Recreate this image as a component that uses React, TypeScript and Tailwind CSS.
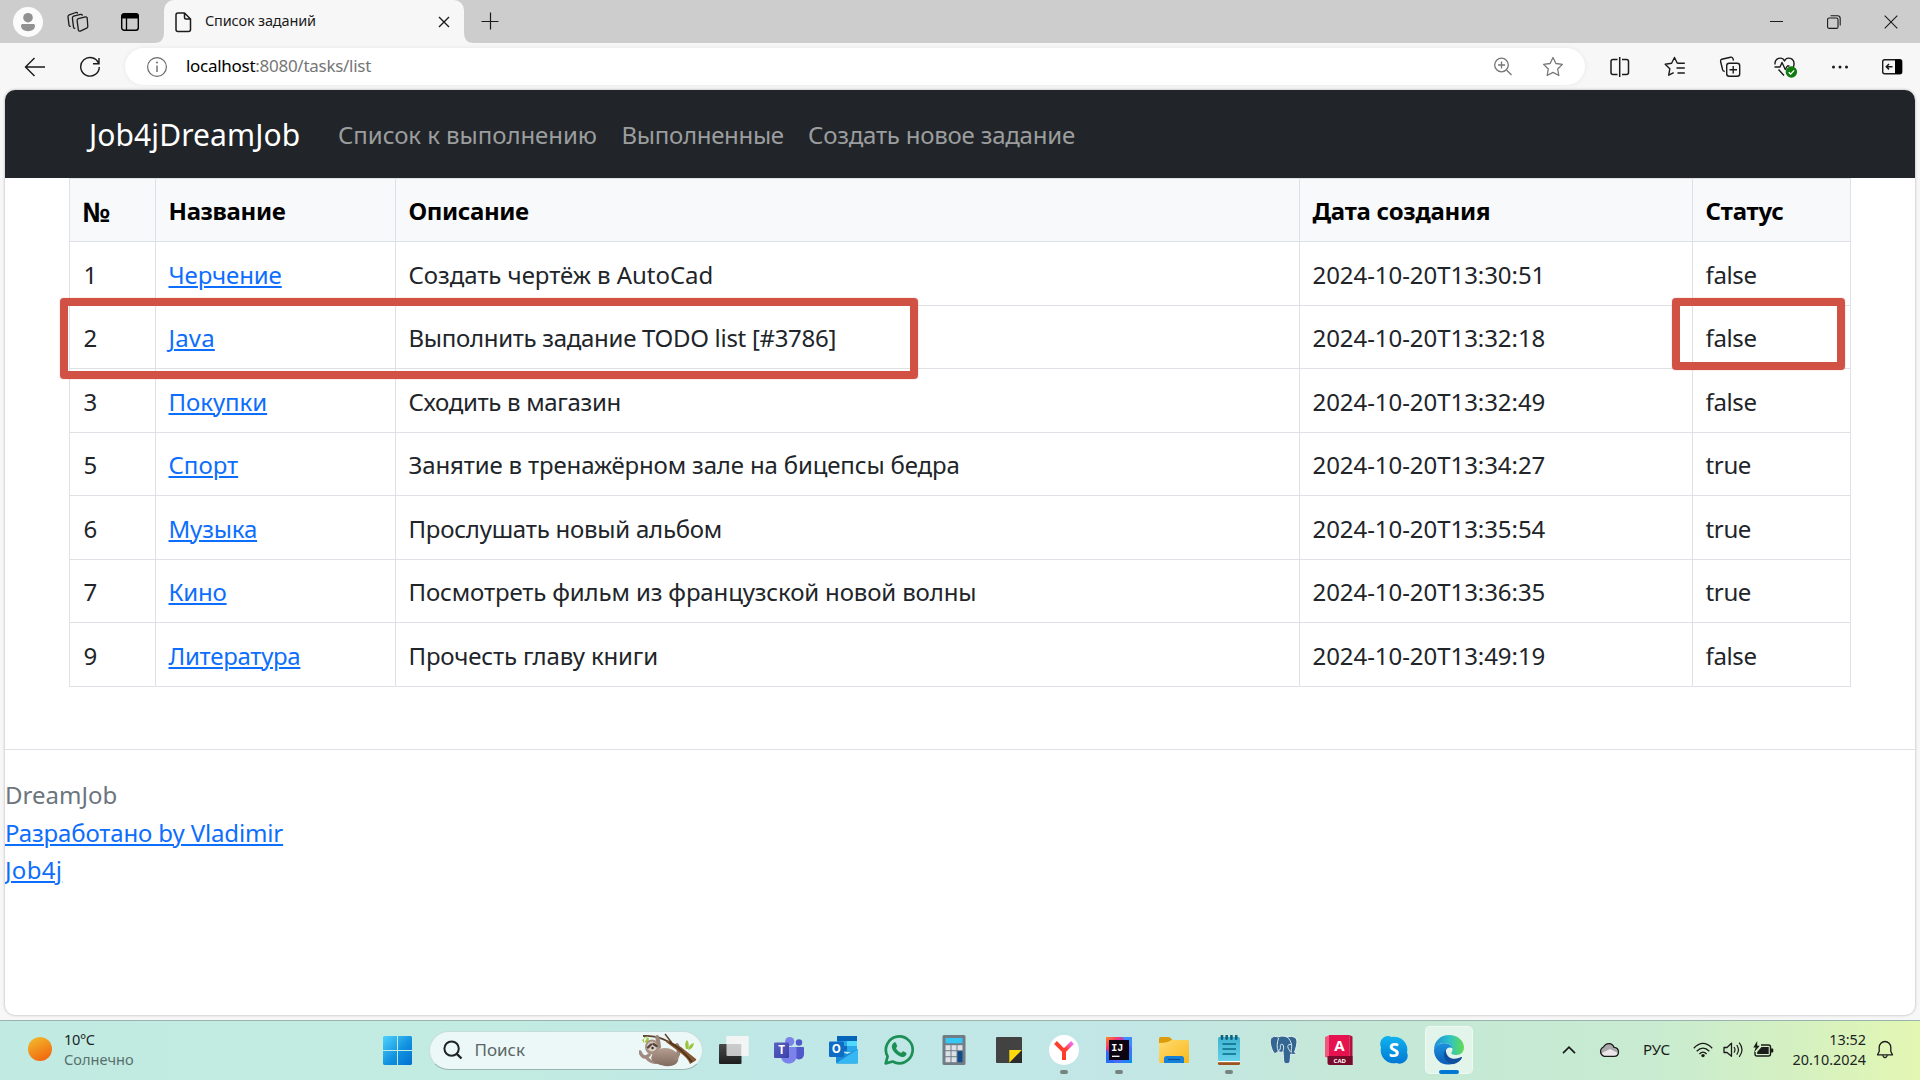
import React from "react";

type Task = { id: number; name: string; nameCls: string; text: string; textCls: string; time: string; done: boolean; h: string };

const tasks: Task[] = [
  { id: 1, name: "Черчение", nameCls: "tracking-[-0.09px]", text: "Создать чертёж в AutoCad", textCls: "tracking-[-0.05px]", time: "2024-10-20T13:30:51", done: false, h: "h-[64px]" },
  { id: 2, name: "Java", nameCls: "tracking-[0.15px]", text: "Выполнить задание TODO list [#3786]", textCls: "tracking-[-0.3px]", time: "2024-10-20T13:32:18", done: false, h: "h-[63px]" },
  { id: 3, name: "Покупки", nameCls: "tracking-[-0.05px]", text: "Сходить в магазин", textCls: "tracking-[-0.32px]", time: "2024-10-20T13:32:49", done: false, h: "h-[64px]" },
  { id: 5, name: "Спорт", nameCls: "", text: "Занятие в тренажёрном зале на бицепсы бедра", textCls: "tracking-[-0.15px]", time: "2024-10-20T13:34:27", done: true, h: "h-[63px]" },
  { id: 6, name: "Музыка", nameCls: "tracking-[-0.15px]", text: "Прослушать новый альбом", textCls: "tracking-[-0.24px]", time: "2024-10-20T13:35:54", done: true, h: "h-[64px]" },
  { id: 7, name: "Кино", nameCls: "tracking-[-0.2px]", text: "Посмотреть фильм из французской новой волны", textCls: "tracking-[-0.14px]", time: "2024-10-20T13:36:35", done: true, h: "h-[63px]" },
  { id: 9, name: "Литература", nameCls: "tracking-[-0.29px]", text: "Прочесть главу книги", textCls: "tracking-[-0.16px]", time: "2024-10-20T13:49:19", done: false, h: "h-[64px]" },
];

const cols = "grid grid-cols-[86px_240px_904px_393px_159px]";
const cell = "flex items-center border-l border-t border-[#dee2e6] pl-[12.5px] pt-[2px] whitespace-nowrap last:border-r";
const link = "text-[#0d6efd] underline decoration-2 underline-offset-2";

function Ico({ w, h, cls = "", children }: { w: number; h: number; cls?: string; children: React.ReactNode }) {
  return (
    <svg width={w} height={h} viewBox={`0 0 ${w} ${h}`} fill="none" className={"shrink-0 " + cls}>
      {children}
    </svg>
  );
}

function TabStrip() {
  return (
    <div className="flex h-[43px] items-center bg-[#cdcdcd] pl-[13px] pr-[22px]">
      <Ico w={30} h={30}>
        <circle cx="15" cy="15" r="15" fill="#fbfbfb" />
        <circle cx="15" cy="10.7" r="4.8" fill="#919191" />
        <path d="M8 18.5q0-1.5 1.500-1.500h11q1.500 0 1.500 1.500c0 3.700-3 5.700-7 5.700s-7-2-7-5.700z" fill="#919191" />
      </Ico>
      <Ico w={24} h={24} cls="ml-[23px]">
        <g stroke="#1b1b1b" strokeWidth="1.300" strokeLinejoin="round" strokeLinecap="round">
          <path d="M12.300 8.600l7.200-1.700q1.400-.2 1.700 1.100l.6 8.500q0 1.300-1.200 1.700l-6.300 2.900q-1.500.4-1.900-1l-1.300-9.400q-.1-1.600 1.200-2.100z" />
          <path d="M8.700 18.400q-1-.2-1.200-1.300L6.400 8.200q0-1.500 1.200-2l7-1.800q1.300-.2 1.700.8" />
          <path d="M4.200 16.400q-1-.2-1.200-1.300L2 6.800q0-1.500 1.200-2l6.600-2.300q1.200-.2 1.700.5" />
        </g>
      </Ico>
      <Ico w={20} h={20} cls="ml-[30px]">
        <rect x="1.700" y="1.700" width="16.600" height="16.600" rx="2.500" stroke="#000" strokeWidth="1.400" />
        <path d="M1.500 6.500V3.500q0-2 2-2h13q2 0 2 2v3z" fill="#000" />
        <path d="M6.500 6v12" stroke="#000" strokeWidth="1.300" />
      </Ico>
      <div className="relative ml-6 flex h-[43px] w-[300px] items-center rounded-t-[10px] bg-[#f7f7f7] pl-[10px] pr-[14px]">
        <Ico w={10} h={10} cls="absolute -left-[10px] bottom-0">
          <path d="M10 0v10H0Q10 10 10 0z" fill="#f7f7f7" />
        </Ico>
        <Ico w={10} h={10} cls="absolute -right-[10px] bottom-0">
          <path d="M0 0v10h10Q0 10 0 0z" fill="#f7f7f7" />
        </Ico>
        <Ico w={18} h={22}>
          <path d="M4 2h6.500l6 6v10.500q0 2-2 2H4q-2 0-2-2V4q0-2 2-2z M10.500 2v4.500q0 1.500 1.500 1.500h4.500" stroke="#1b1b1b" strokeWidth="1.500" strokeLinejoin="round" />
        </Ico>
        <span className="ml-[13px] -mt-[2px] flex-1 text-[14.5px] tracking-[-0.16px] text-[#1b1b1b]">Список заданий</span>
        <Ico w={12} h={12}>
          <path d="M1 1l10 10M11 1L1 11" stroke="#1b1b1b" strokeWidth="1.400" />
        </Ico>
      </div>
      <Ico w={18} h={18} cls="ml-[17px] -mt-[2px]">
        <path d="M9.500 .5v17M.5 9.500h17" stroke="#1b1b1b" strokeWidth="1.200" />
      </Ico>
      <div className="flex-1" />
      <Ico w={14} h={14}>
        <path d="M0 6.500h13" stroke="#1b1b1b" />
      </Ico>
      <Ico w={14} h={14} cls="ml-[43px]">
        <rect x=".6" y="3" width="10.400" height="10.400" rx="1.500" stroke="#1b1b1b" strokeWidth="1.100" />
        <path d="M3.500 .8h7q2.700 0 2.700 2.700v7" stroke="#1b1b1b" strokeWidth="1.100" />
      </Ico>
      <Ico w={14} h={14} cls="ml-[43px]">
        <path d="M.7 .7l12.600 12.600M13.300 .7L.7 13.300" stroke="#1b1b1b" strokeWidth="1.100" />
      </Ico>
    </div>
  );
}

function Toolbar() {
  return (
    <div className="flex h-[47px] items-center bg-[#f7f7f7] pl-6 pr-4">
      <Ico w={22} h={20}>
        <path d="M21 10H2M10.500 1L1.500 10l9 9" stroke="#1b1b1b" strokeWidth="1.400" />
      </Ico>
      <Ico w={22} h={22} cls="ml-[33px]">
        <path d="M19.700 7.500A9.300 9.300 0 1 0 20.300 11M20 2v5.800h-6" stroke="#1b1b1b" strokeWidth="1.400" />
      </Ico>
      <div className="ml-6 flex h-[37px] w-[1460px] items-center rounded-full bg-white pl-[21px] pr-[21px] shadow-[0_0_5px_rgba(0,0,0,0.07)]">
        <Ico w={22} h={22}>
          <circle cx="11" cy="11" r="9.400" stroke="#6b6b6b" strokeWidth="1.200" />
          <path d="M11 9.500v6.500" stroke="#6b6b6b" strokeWidth="1.400" />
          <circle cx="11" cy="6.600" r="1" fill="#6b6b6b" />
        </Ico>
        <span className="ml-[18px] -mt-[1px] text-[17px] tracking-[-0.28px] text-[#767676]">
          <span className="text-black">localhost</span>:8080/tasks/list
        </span>
        <div className="flex-1" />
        <Ico w={20} h={20}>
          <circle cx="8.500" cy="8" r="6.800" stroke="#767676" strokeWidth="1.300" />
          <path d="M13.500 13l5 5M8.500 4.500v7M5 8h7" stroke="#767676" strokeWidth="1.300" />
        </Ico>
        <Ico w={22} h={22} cls="ml-[29px]">
          <path d="M11 1.500l2.900 6 6.500.9-4.700 4.600 1.100 6.500L11 16.400l-5.800 3.100 1.100-6.500L1.600 8.400l6.500-.9z" stroke="#767676" strokeWidth="1.300" strokeLinejoin="round" />
        </Ico>
      </div>
      <Ico w={24} h={24} cls="ml-[23px]">
        <path d="M9.500 4.500H5q-2 0-2 2v11q0 2 2 2h4.500M14 4.500h4.500q2 0 2 2v11q0 2-2 2H14M11.700 2v20" stroke="#1b1b1b" strokeWidth="1.500" />
      </Ico>
      <Ico w={24} h={24} cls="ml-[31px]">
        <path d="M14.300 8.300L11.500 2.500 8.600 8.300 2.200 9.300l4.600 4.500-1.100 6.400 5-2.600M14.300 8.300h7.500M13.500 13h8.300M14.500 18h7.300" stroke="#1b1b1b" strokeWidth="1.400" strokeLinejoin="round" />
      </Ico>
      <Ico w={24} h={24} cls="ml-[31px]">
        <path d="M6.700 16.500q-1.500-.2-2-1.500L2.600 6.500q-.3-1.800 1.300-2.300l8.600-2q1.800-.4 2.400 1.200l.6 2.200" stroke="#1b1b1b" strokeWidth="1.400" />
        <rect x="8.700" y="8.200" width="13" height="13" rx="2.500" stroke="#1b1b1b" strokeWidth="1.400" />
        <path d="M15.200 11v7.500M11.500 14.700H19" stroke="#1b1b1b" strokeWidth="1.400" />
      </Ico>
      <Ico w={26} h={24} cls="ml-[31px]">
        <path d="M2 9.500c-.5-6.500 7-8.500 9.500-3.500 2.500-5 10-3 9.500 3.500q0 1.500-1 2.700M1.500 12H7l2-4.500 3.300 7 2-3.500h2.200M5.500 14.500l5.500 6" stroke="#1b1b1b" strokeWidth="1.400" strokeLinejoin="round" />
        <circle cx="18.400" cy="17" r="5.700" fill="#107c10" />
        <path d="M15.700 17.200l2 1.900 3.400-3.700" stroke="#fff" strokeWidth="1.400" />
      </Ico>
      <Ico w={24} h={24} cls="ml-[29px]">
        <circle cx="5.500" cy="12" r="1.500" fill="#1b1b1b" />
        <circle cx="12" cy="12" r="1.500" fill="#1b1b1b" />
        <circle cx="18.500" cy="12" r="1.500" fill="#1b1b1b" />
      </Ico>
      <Ico w={24} h={24} cls="ml-[28px]">
        <rect x="2.700" y="4.700" width="19" height="14" rx="2" stroke="#1b1b1b" strokeWidth="1.400" />
        <path d="M15 4.500h5q2 0 2 2v10.500q0 2-2 2h-5z" fill="#000" />
        <path d="M12.500 11.700H6.500M9 9l-2.700 2.700L9 14.400" stroke="#1b1b1b" strokeWidth="1.500" />
      </Ico>
    </div>
  );
}

function Page() {
  return (
    <div className="relative mx-[5px] h-[925px] w-[1910px] overflow-hidden rounded-[10px] bg-white shadow-[0_0_3px_rgba(0,0,0,0.3)]">
      <nav className="flex h-[88px] items-center bg-[#212529] pl-[84px] pt-[2px] text-2xl leading-none whitespace-nowrap text-[#9b9d9e]">
        <span className="w-[249px] text-[30px] tracking-[0.1px] text-white">Job4jDreamJob</span>
        <span className="w-[283.5px] tracking-[-0.06px]">Список к выполнению</span>
        <span className="w-[186.5px] tracking-[-0.3px]">Выполненные</span>
        <span className="tracking-[-0.22px]">Создать новое задание</span>
      </nav>
      <div className="ml-16 w-[1782px] border-b border-[#dee2e6] text-2xl leading-none text-[#212529]">
        <div className={cols + " h-[63px] bg-[#f8f9fa] font-bold text-black"}>
          <div className={cell}><span className="text-[27px]">№</span></div>
          <div className={cell + " tracking-[-0.35px]"}>Название</div>
          <div className={cell + " tracking-[-0.38px]"}>Описание</div>
          <div className={cell + " tracking-[-0.25px]"}>Дата создания</div>
          <div className={cell + " tracking-[-0.2px]"}>Статус</div>
        </div>
        {tasks.map((t) => (
          <div key={t.id} className={cols + " " + t.h}>
            <div className={cell}><span className="pl-[1px]">{t.id}</span></div>
            <div className={cell}><a className={link + " " + t.nameCls}>{t.name}</a></div>
            <div className={cell + " " + t.textCls}>{t.text}</div>
            <div className={cell + " tracking-[-0.06px]"}>{t.time}</div>
            <div className={cell + " tracking-[-0.35px]"}>{String(t.done)}</div>
          </div>
        ))}
      </div>
      <footer className="mt-[62px] flex flex-col items-start border-t border-[#dee2e6] pt-[26px] text-2xl leading-[37.5px]">
        <span className="text-[#6c757d]">DreamJob</span>
        <a className={link + " tracking-[-0.14px]"}>Разработано by Vladimir</a>
        <a className={link + " tracking-[0.3px]"}>Job4j</a>
      </footer>
      <div className="absolute left-[55px] top-[208px] h-[81px] w-[858px] rounded-[4px] border-8 border-[#d15145] shadow-[0_0_1px_#d15145]" />
      <div className="absolute left-[1667px] top-[208px] h-[72px] w-[173px] rounded-[4px] border-8 border-[#d15145] shadow-[0_0_1px_#d15145]" />
    </div>
  );
}

function Sloth() {
  return (
    <Ico w={60} h={34}>
      <defs>
        <linearGradient id="fur" x1="0" y1="0" x2="0" y2="1"><stop stopColor="#b59e90" /><stop offset="1" stopColor="#806a5e" /></linearGradient>
      </defs>
      <path d="M4 3Q18 2 30 9" stroke="#5d4430" strokeWidth="1.800" />
      <path d="M26 1l7 9" stroke="#5d4430" strokeWidth="1.500" />
      <path d="M5 4l5 1-1 5-4-1zM9 3l-6 4 2 3z" fill="#a5c83c" />
      <path d="M47 16q-2-6 1-9 3 4 1 9zM49 17q1-6 6-7-1 6-6 7z" fill="#9ac43a" />
      <path d="M10 22Q4 27 1 19M8 25q4 5 10 4" stroke="#a08a7d" strokeWidth="3.500" strokeLinecap="round" />
      <path d="M14 20q8-7 18-4 10 4 7 12-2 6-13 5-12-2-14-8z" fill="url(#fur)" />
      <path d="M20 14q-1-8-2-10" stroke="#9c8679" strokeWidth="4" strokeLinecap="round" />
      <path d="M37 25q5-7 1-13" stroke="#9c8679" strokeWidth="4" strokeLinecap="round" />
      <path d="M28 7l14 7 15 12q1 1-1 2l-5 3q-2-6-12-13L27 9z" fill="#80552f" />
      <path d="M30 9q12 6 23 20" stroke="#4c301b" strokeWidth="1.500" />
      <ellipse cx="13" cy="14" rx="7" ry="7.500" fill="#a58f81" />
      <ellipse cx="13" cy="13.500" rx="5" ry="5" fill="#d8ccc0" />
      <path d="M9 14.500l3-3M14.500 11l3 2" stroke="#54423c" strokeWidth="2.400" strokeLinecap="round" />
      <circle cx="13.500" cy="15" r="1.200" fill="#352925" />
    </Ico>
  );
}

function App30({ children, run = false }: { children: React.ReactNode; run?: boolean }) {
  return (
    <div className="relative flex h-[60px] w-[55px] items-center justify-center">
      <Ico w={30} h={30}>{children}</Ico>
      {run && <div className="absolute bottom-[6px] h-1 w-2 rounded-full bg-[#76847f]" />}
    </div>
  );
}

const glyph = "font-['Open_Sans',sans-serif] font-bold";

function AppIcons() {
  return (
    <div className="ml-[3.5px] -mt-[1px] flex">
      <svg width="0" height="0" className="absolute">
        <defs>
          <linearGradient id="dark" x2="0" y2="1"><stop stopColor="#4a4a4a" /><stop offset="1" stopColor="#1e1e1e" /></linearGradient>
          <linearGradient id="tms" x2="1" y2="1"><stop stopColor="#5a62c3" /><stop offset="1" stopColor="#3b40a8" /></linearGradient>
          <linearGradient id="ya" x1="0" y1="1" x2="1" y2="0"><stop stopColor="#ff3a1c" /><stop offset=".6" stopColor="#ff4030" /><stop offset="1" stopColor="#f070ff" /></linearGradient>
          <linearGradient id="ij" x1="0" y1="0" x2="1" y2="1"><stop stopColor="#ff8a1c" /><stop offset=".25" stopColor="#f0337a" /><stop offset=".5" stopColor="#6b57ff" /><stop offset="1" stopColor="#0894f0" /></linearGradient>
          <linearGradient id="fold" x2="1" y2="1"><stop stopColor="#ffdc70" /><stop offset="1" stopColor="#f9b81c" /></linearGradient>
          <linearGradient id="note" x2="0" y2="1"><stop stopColor="#3fb4d2" /><stop offset="1" stopColor="#67d3ea" /></linearGradient>
          <linearGradient id="sky" x2="0" y2="1"><stop stopColor="#12b4ee" /><stop offset="1" stopColor="#0077d4" /></linearGradient>
          <linearGradient id="edA" x1="0" y1=".5" x2="1" y2=".5"><stop stopColor="#1d8fd8" /><stop offset=".5" stopColor="#2cc1c9" /><stop offset="1" stopColor="#63dc4f" /></linearGradient>
          <linearGradient id="edB" x2="0" y2="1"><stop stopColor="#1a93df" /><stop offset="1" stopColor="#0c5cb8" /></linearGradient>
        </defs>
      </svg>
      <App30>
        <rect x="0" y="9" width="22.500" height="20" rx="1" fill="url(#dark)" />
        <rect x="7.500" y="1" width="22" height="20" rx="1" fill="#fff" fillOpacity=".72" />
        <path d="M22.500 9v12h7V1h-22v8z" fill="#f4f4f4" fillOpacity=".8" />
      </App30>
      <App30>
        <circle cx="15.700" cy="6.500" r="4.600" fill="#7b83eb" />
        <circle cx="25" cy="7.500" r="3.200" fill="#5059c9" />
        <path d="M20 12h9q1 0 1 1v6c0 6-7 7-9 3z" fill="#5059c9" />
        <path d="M7 12h14.500q1 0 1 1v8c0 10-15.500 10-15.500 0z" fill="#7b83eb" />
        <rect x="0" y="7.500" width="15" height="15.500" rx="1" fill="url(#tms)" />
        <text x="7.500" y="19.300" textAnchor="middle" fontSize="11.500" fill="#fff" className={glyph}>T</text>
      </App30>
      <App30>
        <rect x="8" y="1" width="20" height="16" rx="1" fill="#28a8ea" />
        <path d="M8 1h20v5H8z" fill="#0364b8" />
        <path d="M18 6h10v5H18z" fill="#50d9ff" />
        <path d="M8 11h10v5H8z" fill="#0f6bbd" />
        <path d="M7 14l11 5 11-5v13q0 1.500-1.500 1.500h-19Q7 28.500 7 27z" fill="#1b8ad8" />
        <path d="M7 28.500L29 14v13q0 1.500-1.500 1.500z" fill="#35b8f1" />
        <rect x="0" y="6.500" width="15" height="15.500" rx="1" fill="#0f6cc4" />
        <text x="7.400" y="18.400" textAnchor="middle" fontSize="11.500" fill="#fff" className={glyph}>O</text>
      </App30>
      <App30>
        <path d="M1.700 28.400l1.900-7A13.400 13.400 0 1 1 8.700 26.500z" stroke="#1c8f56" strokeWidth="2.700" strokeLinejoin="round" />
        <path d="M9.700 7.800c1-.8 2-.6 2.300.2l1.200 2.900c.2.800-1 1.700-1.300 2.200.9 2.300 3 4 5.200 4.900.8-.6 1.400-2 2.100-1.700l3 1.500c.9.500-.1 3.300-2.100 4-4.500 1.700-13.500-6-12.200-11.200.3-1.100.9-2.100 1.800-2.800z" fill="#1c8f56" />
      </App30>
      <App30>
        <rect x="3.500" y="0" width="23" height="30" rx="1.500" fill="#727c85" />
        <rect x="6.500" y="3" width="17" height="5.300" fill="#35c8f4" />
        <g fill="#dbe1e7">
          <rect x="6.500" y="10.200" width="5" height="5" /><rect x="12.500" y="10.200" width="5" height="5" /><rect x="18.500" y="10.200" width="5" height="5" />
          <rect x="6.500" y="16.200" width="5" height="5" /><rect x="12.500" y="16.200" width="5" height="5" />
          <rect x="6.500" y="22.200" width="5" height="5" /><rect x="12.500" y="22.200" width="5" height="5" />
        </g>
        <rect x="18.500" y="16.200" width="5" height="11" fill="#0f4a8a" />
      </App30>
      <App30>
        <rect x="2" y="2" width="26" height="26" rx="1" fill="#424242" />
        <path d="M15.300 28V15H28z" fill="#fcd90a" />
        <path d="M15.300 28L28 15v13z" fill="#2b2b2b" />
      </App30>
      <App30 run>
        <circle cx="15" cy="15" r="15" fill="#fff" />
        <path d="M6.500 7.500l8.500 8.500v9M15 16l8.500-8.500" stroke="url(#ya)" strokeWidth="4" />
      </App30>
      <App30 run>
        <rect x="2" y="2" width="26" height="26" fill="url(#ij)" />
        <path d="M18 2h10v11z" fill="#3c8cff" />
        <path d="M2 14v14h9z" fill="#2a6cf5" />
        <rect x="5" y="5" width="20" height="20" fill="#0c0410" />
        <text x="7.200" y="15.800" fontSize="10" fill="#fff" className="font-['Liberation_Mono',monospace] font-bold">IJ</text>
        <path d="M8 21.300h7.500" stroke="#fff" strokeWidth="1.300" />
      </App30>
      <App30>
        <path d="M0 8V3.500Q0 2 1.500 2h8q1 0 1.800.8L13.500 5V8z" fill="#dd9c0a" />
        <path d="M0 8q9 0 12.500-3h16q1.500 0 1.500 1.500v20q0 1.500-1.500 1.500h-27Q0 28 0 26.500z" fill="url(#fold)" />
        <path d="M5 28v-4.500Q5 21 7.500 21h15q2.500 0 2.500 2.500V28z" fill="#1580d8" />
        <path d="M9 24.500h12" stroke="#0b4f94" strokeWidth="1.200" />
      </App30>
      <App30 run>
        <rect x="4" y="2" width="22" height="25" rx="1.500" fill="url(#note)" />
        <path d="M4 26h22v2.500q0 1.500-1.500 1.500h-19Q4 30 4 28.500z" fill="#a0521d" />
        <path d="M4 26h22v1.200H4z" fill="#fff" />
        <path d="M8.500 9h13.500M8.500 14h13.500M8.500 19h13.500" stroke="#096b85" strokeWidth="1.700" />
        <path d="M8 .8v3M12.700 .8v3M17.400 .8v3M22.200 .8v3" stroke="#15627c" strokeWidth="2.600" strokeLinecap="round" />
      </App30>
      <App30>
        <path d="M9 2C4 0 .8 3 1.300 7.500 1.800 12 4 18 6 18.500c1.500 0 2.500-2 3.200-2.300.7 1 2.800 1.300 4.800.8.600 3 .2 8 1 10.200 1 2.200 5.300 2 6-.7.500-2.500.3-5 .8-7.500 2 .8 5.200.6 6.200-1.200-1 .2-2 .2-2.500-.6C27 13.500 28.500 8 27.800 5c-1-3.500-6-4.500-9.500-2.800C15.500.7 12 .8 9 2z" fill="#336791" stroke="#e8f2f2" strokeWidth="1" />
        <path d="M9.300 16c-1.800-3-1.300-8 .2-13M9.300 16c2-.5 2.300-3 2-5.500-.2-1.500 2.700-2 3.200.5.500 3-.5 4-.5 6M18.500 2.200c2 2 3.500 4.500 4 7.500-2-.6-4 0-3.700 2 .2 2 2.200 4.500 3.500 6M22.500 9.700c.6 2.500-.6 5-.2 7.500" stroke="#dceaf0" strokeWidth="1" />
      </App30>
      <App30>
        <path d="M1 2l5-2v23l-5-1z" fill="#f0577f" />
        <path d="M5 0h20.500v21H5z" fill="#e5124f" />
        <path d="M25.500 0l3 1.500V30h-3z" fill="#b30f3f" />
        <path d="M3.500 21h25v9h-23q-2 0-2-2z" fill="#780a2c" />
        <text x="15.500" y="16.300" textAnchor="middle" fontSize="15" fill="#fff" className={glyph}>A</text>
        <text x="15.800" y="27.600" textAnchor="middle" fontSize="6" fill="#fff" className={glyph}>CAD</text>
      </App30>
      <App30>
        <path d="M9 1A8 8 0 0 0 2 12.500 13 13 0 0 0 17.500 28 8 8 0 0 0 28 17.500 13 13 0 0 0 12.500 2 8 8 0 0 0 9 1z" fill="url(#sky)" />
        <text x="15" y="21.800" textAnchor="middle" fontSize="19" fill="#fff" className={glyph}>S</text>
      </App30>
      <div className="relative flex h-[60px] w-[55px] items-center justify-center">
        <div className="flex h-12 w-12 items-center justify-center rounded-[5px] border border-white/40 bg-white/50">
          <Ico w={30} h={30}>
            <path d="M0 15C0 6 6.500 0 15.200 0 23.500 0 30 5.500 30 12.500c0 4.500-3.300 7.500-7.500 7.500-3.500 0-5.700-1.200-5.200-2.200.6-.9 1.200-1.500 1.200-3.300C18.500 11 15 8 10.500 8 5 8 1 11.500 0 15z" fill="url(#edA)" />
            <path d="M0 15C1 10.500 5.500 8.200 10.200 8.200c4.300 0 7.500 2 8.200 5C17 11.800 12 12 11.500 17c-.5 6 5 10.500 9 11C10 33 0 25.500 0 15z" fill="url(#edB)" />
            <path d="M11.800 14.500C8.500 18 9 27.500 19 29.300c4.500-1 7.500-3.500 9-6.600.2-.7-.4-1-1-.6C20 26 11.500 23 11.800 14.500z" fill="#104f9e" />
          </Ico>
        </div>
        <div className="absolute bottom-[6px] h-1 w-5 rounded-full bg-[#0078d4]" />
      </div>
    </div>
  );
}

function Taskbar() {
  return (
    <div className="flex h-[60px] items-center border-t border-[#97b5ae] bg-[linear-gradient(90deg,#c1eae2_0%,#c2ebe1_25%,#bfe8e6_40%,#c2e6e6_58%,#c5e8d8_70%,#c8ebd1_86%,#d6f1c0_94%,#e3f7b3_100%)]">
      <Ico w={24} h={24} cls="ml-7 -mt-[3px]">
        <defs><linearGradient id="sun" x1=".2" y1="0" x2=".7" y2="1"><stop stopColor="#f2b92c" /><stop offset="1" stopColor="#f2650f" /></linearGradient></defs>
        <circle cx="12" cy="12" r="12" fill="url(#sun)" />
      </Ico>
      <div className="ml-3 -mt-[3px] w-[319px] text-[14.6px] leading-5">
        <div className="tracking-[-0.4px] text-[#1b2523]">10°C</div>
        <div className="text-[#57706c]">Солнечно</div>
      </div>
      <Ico w={29} h={29}>
        <defs><linearGradient id="win" x2="1" y2="1"><stop stopColor="#4fd3fc" /><stop offset=".55" stopColor="#1292e0" /><stop offset="1" stopColor="#0070d0" /></linearGradient></defs>
        <path d="M1 0h13v14H0V1zM15 0h13l1 1v13H15zM0 15h14v14H1l-1-1zM15 15h14v13l-1 1H15z" fill="url(#win)" />
      </Ico>
      <div className="ml-[17px] -mt-[1px] flex h-[39px] w-[274px] items-center rounded-full border border-[#c6dedb] border-b-[#97b5b1] bg-[#ecf8f7] pl-[13px] pr-[3px]">
        <Ico w={20} h={20}>
          <circle cx="8.600" cy="8.600" r="7.200" stroke="#1f2423" strokeWidth="2" />
          <path d="M13.500 13.700l5 4.800" stroke="#1f2423" strokeWidth="2.400" />
        </Ico>
        <span className="ml-[11.5px] flex-1 text-[17px] text-[#5a6664]">Поиск</span>
        <Sloth />
      </div>
      <AppIcons />
      <div className="flex-1" />
      <Ico w={14} h={8} cls="-mt-[1px]">
        <path d="M1 7.200L7 1.200l6 6" stroke="#1b1b1b" strokeWidth="1.700" />
      </Ico>
      <Ico w={22} h={16} cls="ml-[22px] -mt-[2px]">
        <path d="M6 14.300A5 5 0 0 1 5.500 5C8 .2 14.500.5 16 5.300c6 .5 6 9 0 9z" fill="#a9a9a9" />
        <path d="M2 12l10-5 8 4q-1 3.300-4 3.300H6q-3 0-4-2.300z" fill="#ece6ea" />
        <path d="M6 14.300A5 5 0 0 1 5.500 5C8 .2 14.500.5 16 5.300c6 .5 6 9 0 9z" stroke="#1b1b1b" strokeWidth="1.300" />
      </Ico>
      <span className="ml-[23px] -mt-[2px] w-[50px] text-[15px] text-[#1b1b1b]">РУС</span>
      <Ico w={20} h={16} cls="-mt-[1px]">
        <path d="M.8 6.200q9.200-9.500 18.400 0M3.700 9.300q6.300-6.500 12.600 0M6.400 12q3.600-3.700 7.200 0" stroke="#1b1b1b" strokeWidth="1.300" />
        <circle cx="10" cy="13.600" r="1.700" fill="#1b1b1b" />
      </Ico>
      <Ico w={20} h={18} cls="ml-[10px] -mt-[1px]">
        <path d="M1 6.500h3L8.500 2.300v13L4 11.500H1z" stroke="#1b1b1b" strokeWidth="1.300" strokeLinejoin="round" />
        <path d="M11 6q2 2.800 0 5.600M13.700 4q3.600 4.800 0 9.600M16.200 1.700q5.600 7.100 0 14.200" stroke="#1b1b1b" strokeWidth="1.200" />
      </Ico>
      <Ico w={21} h={17} cls="ml-[10px] -mt-[3px]">
        <path d="M8 4h7.500q2 0 2 2v7q0 2-2 2H4q-2 0-2-2v-2" stroke="#1b1b1b" strokeWidth="1.400" />
        <path d="M8.500 6h7.200v7H4.200v-2z" fill="#1b1b1b" />
        <path d="M17.500 7.500h2q.8 0 .8 1v2q0 1-.8 1h-2zM4.200 0L.3 6.500h2.400L1 11.500l5.700-6.800H4.200z" fill="#1b1b1b" />
      </Ico>
      <div className="-mt-[2px] w-[92px] text-right text-[14.4px] leading-5 text-[#1b2523]">
        <div>13:52</div>
        <div>20.10.2024</div>
      </div>
      <Ico w={18} h={20} cls="ml-[10px] mr-[26px] -mt-[2px]">
        <path d="M1.500 14.800l1.700-3.300V7.300a5.800 5.800 0 0 1 11.600 0v4.200l1.700 3.300z" stroke="#1b1b1b" strokeWidth="1.300" strokeLinejoin="round" />
        <path d="M6.500 15.200q2.500 4.800 5 0" stroke="#1b1b1b" strokeWidth="1.300" />
      </Ico>
    </div>
  );
}

export default function App() {
  return (
    <div className="flex h-[1080px] w-[1920px] flex-col overflow-hidden bg-[#f7f7f7] font-['Noto_Sans','Open_Sans',sans-serif]">
      <TabStrip />
      <Toolbar />
      <Page />
      <div className="h-[5px]" />
      <Taskbar />
    </div>
  );
}
